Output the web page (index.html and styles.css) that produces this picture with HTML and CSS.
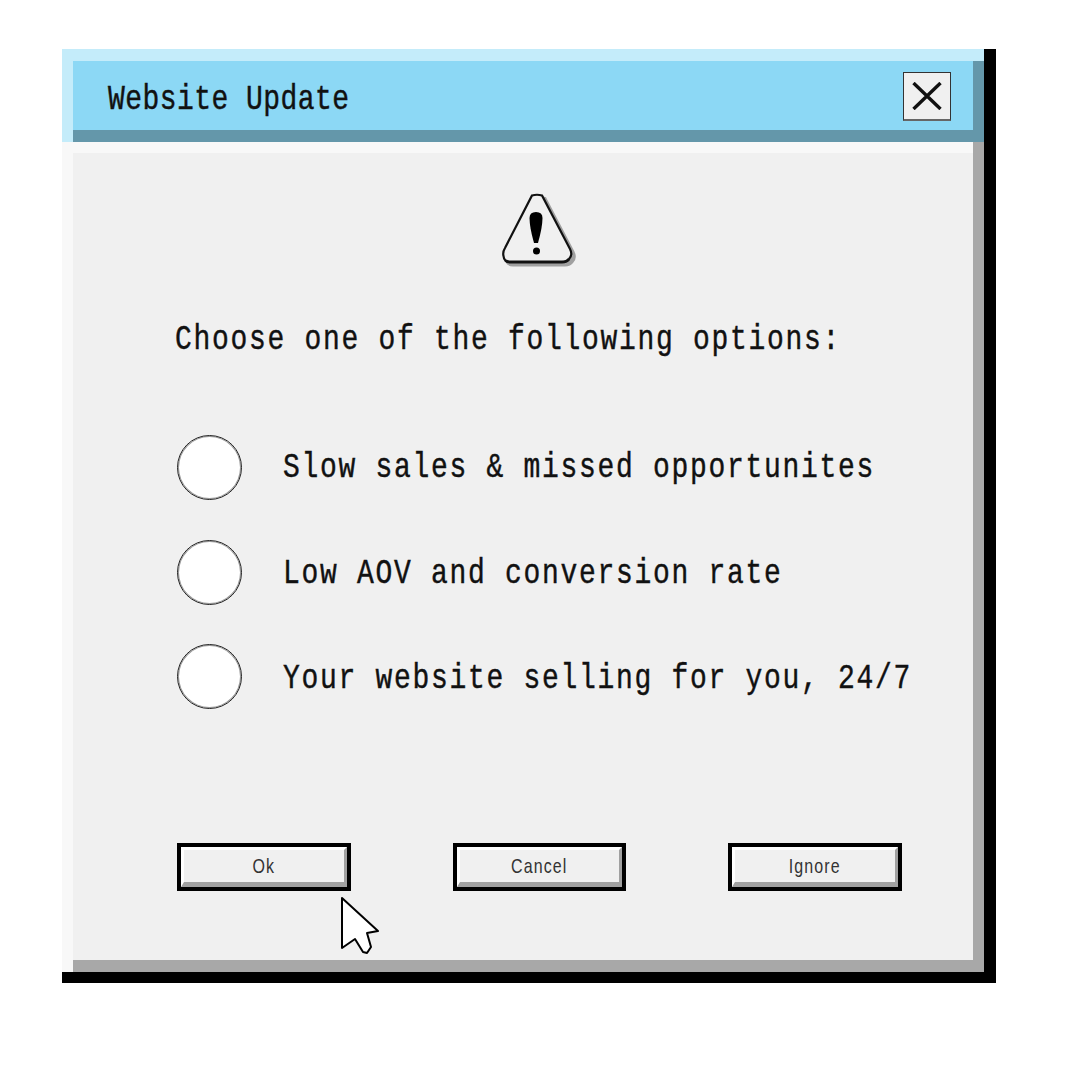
FILE: index.html
```html
<!DOCTYPE html>
<html lang="en">
<head>
<meta charset="utf-8">
<title>Website Update</title>
<link rel="stylesheet" href="styles.css">
</head>
<body>
<div class="shadow">
  <div class="window">
    <div class="title-light">
      <div class="title-dark">
        <header class="title-bar">
          <h1 class="title"><span class="tall">Website Update</span></h1>
          <button class="close" aria-label="Close">
            <svg class="close-x" width="30" height="28" viewBox="0 0 30 28"><path d="M1.5 1 28.5 27M28.5 1 1.5 27" fill="none" stroke="#111" stroke-width="3.4"/></svg>
          </button>
        </header>
      </div>
    </div>
    <div class="body-left">
      <div class="body-right">
        <div class="body-top">
          <main class="content">
            <svg class="warn" width="74" height="75" viewBox="0 0 74 75">
              <path class="warn-shadow" d="M30 2.5Q35 1 40 2.5L68 56Q71 62 67 66Q65 69 60 69L8 69Q2 69 1.5 63Q.5 59 3 55Z"/>
              <path class="warn-line" d="M30 2.5Q35 1 40 2.5L68 56Q71 62 67 66Q65 69 60 69L8 69Q2 69 1.5 63Q.5 59 3 55Z"/>
              <path d="M67 66Q65 69 60 69L8 69Q5 69 3.5 67.5" fill="none" stroke="#111" stroke-width="3"/>
              <path d="M27.5 25Q27.5 19 34 19Q40.5 19 40.5 25Q40.5 34 36 50L32 50Q27.5 34 27.5 25Z"/>
              <circle cx="34.5" cy="58" r="3.5"/>
            </svg>
            <p class="heading"><span class="tall">Choose one of the following options:</span></p>
            <ul class="options">
              <li class="option"><span class="radio"></span><span class="label up"><span class="tall">Slow sales &amp; missed opportunites</span></span></li>
              <li class="option"><span class="radio"></span><span class="label"><span class="tall">Low AOV and conversion rate</span></span></li>
              <li class="option"><span class="radio"></span><span class="label"><span class="tall">Your website selling for you, 24/7</span></span></li>
            </ul>
            <div class="buttons">
              <button class="btn"><span class="btn-face"><span class="btn-text">Ok</span></span></button>
              <button class="btn"><span class="btn-face"><span class="btn-text">Cancel</span></span></button>
              <button class="btn"><span class="btn-face"><span class="btn-text">Ignore</span></span></button>
            </div>
            <svg class="cursor" width="42" height="60" viewBox="0 0 42 60"><path d="M2 2 38 35 27 37 31 51 27 57 23 56 15 43 2 52Z" fill="#fff" stroke="#000" stroke-width="2" stroke-linejoin="round"/></svg>
          </main>
        </div>
      </div>
    </div>
  </div>
</div>
</body>
</html>
```

FILE: styles.css
```css
* { box-sizing: border-box; }
html, body { margin: 0; background: #fff; }
body { padding: 49px 0 0 62px; font-family: "Liberation Mono", monospace; color: #111; }

.shadow { width: 934px; height: 934px; background: #000; }
.window { width: 922px; height: 923px; display: flex; flex-direction: column; }

.title-light { background: #c4ecfa; padding: 12px 0 0 11px; }
.title-dark { background: #6497aa; padding: 0 11px 12px 0; }
.title-bar {
  height: 69px; background: #8cd8f5;
  display: flex; align-items: center; justify-content: space-between;
  padding: 0 22px 0 35px;
}
.title, .heading, .label {
  margin: 0; font-weight: 400; font-size: 28px; line-height: 40px;
  letter-spacing: 1.7px; white-space: pre; -webkit-text-stroke: 0.35px #111;
}
.title { letter-spacing: 0.45px; position: relative; top: 4px; }
.tall { display: inline-block; transform: scaleY(1.22); transform-origin: 50% 50%; }

.close {
  width: 48px; height: 49px; padding: 0; margin: 1px 0 0;
  background: #f0f0f0; border: 1px solid #333; border-bottom: 2px solid #666;
  display: flex; align-items: center; justify-content: center;
}

.body-left { flex: 1; background: #f8f8f8; padding-left: 11px; display: flex; }
.body-right { flex: 1; background: #a8a8a8; padding: 0 11px 12px 0; display: flex; }
.body-top { flex: 1; background: #f8f8f8; padding-top: 11px; display: flex; }
.content {
  flex: 1; position: relative; background: #f0f0f0;
  display: flex; flex-direction: column; align-items: flex-start;
  padding: 40px 0 0 104px;
}

.warn { display: block; margin-left: 325px; height: 75px; flex: none; overflow: visible; }
.warn-shadow { fill: #a0a0a0; stroke: #a0a0a0; stroke-width: 3; transform: translate(3px, 3px); }
.warn-line { fill: #f0f0f0; stroke: #111; stroke-width: 2.2; }

.heading { margin: 50px 0 0 -2px; position: relative; top: 2px; }

.options { list-style: none; margin: 77px 0 0; padding: 0; display: flex; flex-direction: column; gap: 39.5px; }
.option { display: flex; align-items: center; height: 65px; }
.radio { width: 65px; height: 65px; border-radius: 50%; background: #fff; border: 1px solid #222; box-shadow: inset 0 0 0 1px #999; flex: none; }
.label { margin-left: 41px; position: relative; top: 2px; }
.label.up { top: 0; }

.buttons { display: flex; gap: 102px; margin-top: 134px; }
.btn { width: 173.5px; height: 48px; padding: 0; margin: 0; background: #000; border: 4px solid #000; display: block; }
.btn-face {
  display: flex; width: 100%; height: 100%; align-items: center; justify-content: center;
  background: #f0f0f0;
  border-style: solid; border-width: 3px 3px 5px 3px;
  border-color: #fff #a0a0a0 #a0a0a0 #fff;
}
.btn-text {
  display: inline-block; font-family: "Liberation Sans", sans-serif; font-size: 16px; line-height: 20px; color: #333;
  transform: scaleY(1.3); letter-spacing: 1.1px; position: relative; top: 0;
}

.cursor { position: absolute; left: 267px; top: 743px; }
```
